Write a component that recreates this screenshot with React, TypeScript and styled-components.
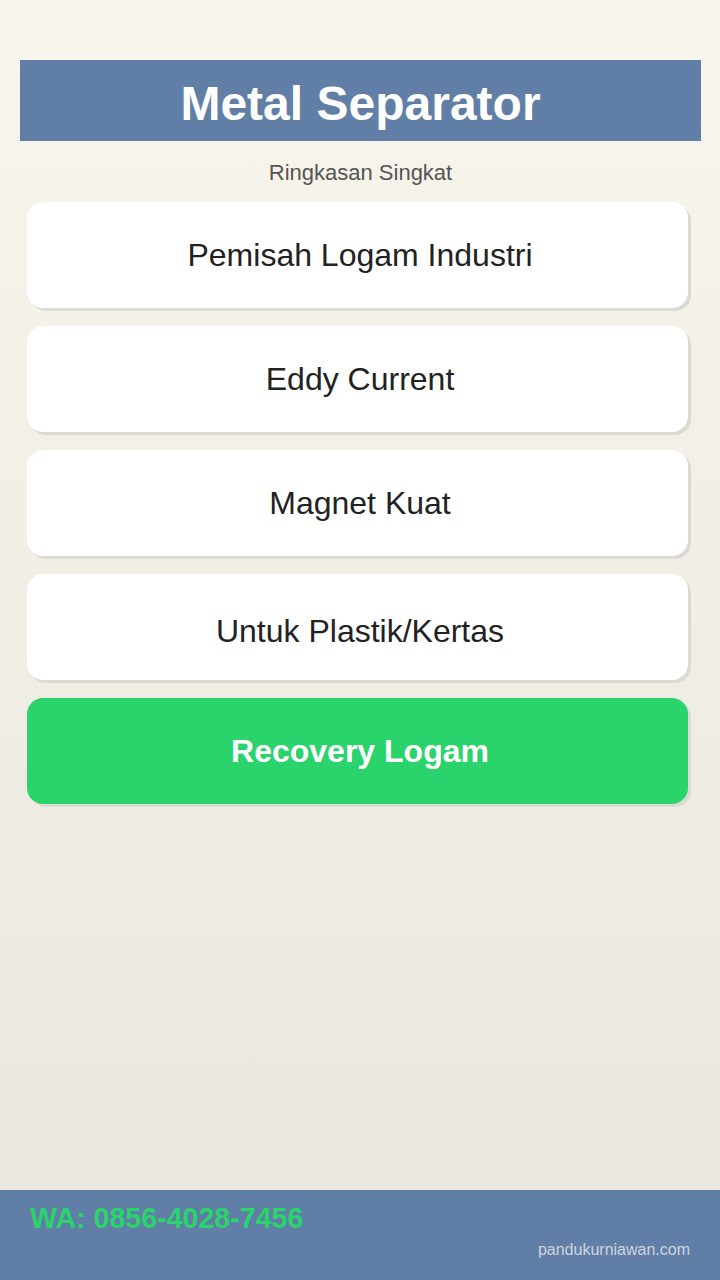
import React from "react";
import styled, { createGlobalStyle } from "styled-components";

const GlobalStyle = createGlobalStyle`
  html, body {
    margin: 0;
    padding: 0;
  }
  body {
    font-family: "Liberation Sans", Arial, sans-serif;
  }
  * {
    box-sizing: border-box;
  }
`;

const Page = styled.div`
  min-height: 1280px;
  display: flex;
  flex-direction: column;
  background: linear-gradient(180deg, #f8f5ec 0%, #e9e6df 100%);
`;

const Main = styled.main`
  flex: 1;
  padding: 60px 19px 0 20px;
`;

const Header = styled.header`
  background: #607ea6;
  height: 81px;
  padding-top: 16px;
  text-align: center;
`;

const Title = styled.h1`
  margin: 0;
  color: #ffffff;
  font-size: 48px;
  font-weight: 700;
  line-height: 55px;
`;

const Subtitle = styled.p`
  margin: 19px 0 17px;
  text-align: center;
  color: #555555;
  font-size: 22px;
  line-height: 25px;
`;

const CardList = styled.div`
  display: flex;
  flex-direction: column;
  gap: 18px;
  width: 661px;
  margin-left: 7px;
`;

const Card = styled.div<{ $primary?: boolean; $drop?: number }>`
  height: 106px;
  display: flex;
  align-items: center;
  justify-content: center;
  padding-left: 5px;
  padding-top: ${(p) => p.$drop ?? 0}px;
  border-radius: 16px;
  background: ${(p) => (p.$primary ? "#2ad36b" : "#ffffff")};
  box-shadow: 3px 3px 0 #dcdad5;
  color: ${(p) => (p.$primary ? "#ffffff" : "#222222")};
  font-size: 32px;
  font-weight: ${(p) => (p.$primary ? 700 : 400)};
`;

const Footer = styled.footer`
  height: 90px;
  background: #607ea6;
  padding: 12px 30px 0;
  display: flex;
  flex-direction: column;
`;

const Phone = styled.div`
  color: #2ad36b;
  font-size: 28.6px;
  font-weight: 700;
  line-height: 32px;
`;

const Site = styled.div`
  align-self: flex-end;
  margin-top: 7px;
  color: #cfd5df;
  font-size: 16px;
  line-height: 18px;
`;

const items = [
  { label: "Pemisah Logam Industri", drop: 0 },
  { label: "Eddy Current", drop: 0 },
  { label: "Magnet Kuat", drop: 0 },
  { label: "Untuk Plastik/Kertas", drop: 8 },
];

export default function App() {
  return (
    <Page>
      <GlobalStyle />
      <Main>
        <Header>
          <Title>Metal Separator</Title>
        </Header>
        <Subtitle>Ringkasan Singkat</Subtitle>
        <CardList>
          {items.map((item) => (
            <Card key={item.label} $drop={item.drop}>
              {item.label}
            </Card>
          ))}
          <Card $primary>Recovery Logam</Card>
        </CardList>
      </Main>
      <Footer>
        <Phone>WA: 0856-4028-7456</Phone>
        <Site>pandukurniawan.com</Site>
      </Footer>
    </Page>
  );
}
